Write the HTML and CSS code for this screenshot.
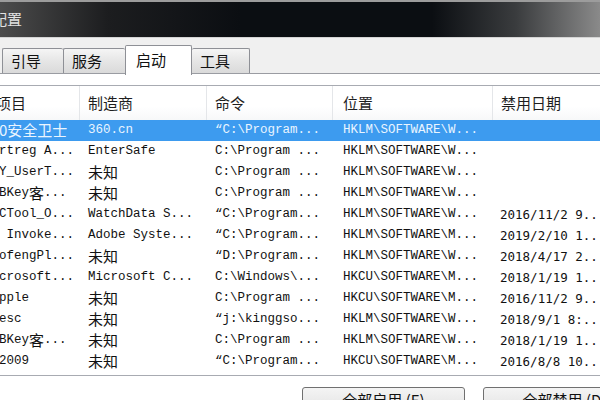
FILE: index.html
```html
<!DOCTYPE html>
<html lang="zh-CN">
<head>
    <meta charset="UTF-8">
    <title>系统配置</title>
    <link rel="stylesheet" href="styles.css">
</head>
<body>
    <div class="titlebar">
        <span class="title">系统配置</span>
    </div>

    <div class="tabbar">
        <div class="tab tab-boot">引导</div>
        <div class="tab tab-svc">服务</div>
        <div class="tab tab-start active">启动</div>
        <div class="tab tab-tools">工具</div>
    </div>

    <div class="panel">
        <div class="list">
            <div class="lv-head">
                <div class="hc c1">启动项目</div>
                <div class="hc">制造商</div>
                <div class="hc">命令</div>
                <div class="hc c4">位置</div>
                <div class="hc">禁用日期</div>
            </div>

            <div class="row sel">
                <div class="cell c1">36<span class="zh">0安全卫士</span></div>
                <div class="cell">360.cn</div>
                <div class="cell">“C:\Program...</div>
                <div class="cell c4">HKLM\SOFTWARE\W...</div>
                <div class="cell date"></div>
            </div>
            <div class="row">
                <div class="cell c1">Vertreg A...</div>
                <div class="cell">EnterSafe</div>
                <div class="cell">C:\Program ...</div>
                <div class="cell c4">HKLM\SOFTWARE\W...</div>
                <div class="cell date"></div>
            </div>
            <div class="row">
                <div class="cell c1">HWY_UserT...</div>
                <div class="cell"><span class="zh">未知</span></div>
                <div class="cell">C:\Program ...</div>
                <div class="cell c4">HKLM\SOFTWARE\W...</div>
                <div class="cell date"></div>
            </div>
            <div class="row">
                <div class="cell c1">USBKey<span class="zh">客</span>...</div>
                <div class="cell"><span class="zh">未知</span></div>
                <div class="cell">C:\Program ...</div>
                <div class="cell c4">HKLM\SOFTWARE\W...</div>
                <div class="cell date"></div>
            </div>
            <div class="row">
                <div class="cell c1">HWCTool_O...</div>
                <div class="cell">WatchData S...</div>
                <div class="cell">“C:\Program...</div>
                <div class="cell c4">HKLM\SOFTWARE\W...</div>
                <div class="cell date">2016/11/2 9...</div>
            </div>
            <div class="row">
                <div class="cell c1">AR Invoke...</div>
                <div class="cell">Adobe Syste...</div>
                <div class="cell">“C:\Program...</div>
                <div class="cell c4">HKLM\SOFTWARE\M...</div>
                <div class="cell date">2019/2/10 1...</div>
            </div>
            <div class="row">
                <div class="cell c1">BaofengPl...</div>
                <div class="cell"><span class="zh">未知</span></div>
                <div class="cell">“D:\Program...</div>
                <div class="cell c4">HKLM\SOFTWARE\W...</div>
                <div class="cell date">2018/4/17 2...</div>
            </div>
            <div class="row">
                <div class="cell c1">Microsoft...</div>
                <div class="cell">Microsoft C...</div>
                <div class="cell">C:\Windows\...</div>
                <div class="cell c4">HKCU\SOFTWARE\M...</div>
                <div class="cell date">2018/1/19 1...</div>
            </div>
            <div class="row">
                <div class="cell c1">QApple</div>
                <div class="cell"><span class="zh">未知</span></div>
                <div class="cell">C:\Program ...</div>
                <div class="cell c4">HKCU\SOFTWARE\M...</div>
                <div class="cell date">2016/11/2 9...</div>
            </div>
            <div class="row">
                <div class="cell c1">KSesc</div>
                <div class="cell"><span class="zh">未知</span></div>
                <div class="cell">“j:\kinggso...</div>
                <div class="cell c4">HKLM\SOFTWARE\W...</div>
                <div class="cell date">2018/9/1 8:...</div>
            </div>
            <div class="row">
                <div class="cell c1">USBKey<span class="zh">客</span>...</div>
                <div class="cell"><span class="zh">未知</span></div>
                <div class="cell">C:\Program ...</div>
                <div class="cell c4">HKLM\SOFTWARE\W...</div>
                <div class="cell date">2018/1/19 1...</div>
            </div>
            <div class="row">
                <div class="cell c1">QQ2009</div>
                <div class="cell"><span class="zh">未知</span></div>
                <div class="cell">“C:\Program...</div>
                <div class="cell c4">HKCU\SOFTWARE\M...</div>
                <div class="cell date">2016/8/8 10...</div>
            </div>
        </div>

        <div class="actions">
            <button class="btn">全部启用 (E)</button>
            <button class="btn">全部禁用 (D)</button>
        </div>
    </div>
</body>
</html>
```

FILE: styles.css
```css
* {
    margin: 0;
    padding: 0;
    box-sizing: border-box;
}

body {
    width: 600px;
    height: 400px;
    overflow: hidden;
    background: #f0f0f0;
    font-family: "Noto Sans CJK SC", sans-serif;
    color: #111;
}

/* window caption */
.titlebar {
    height: 38px;
    border-top: 2px solid #9c9c9c;
    border-bottom: 1px solid #d4d4d4;
    background: linear-gradient(90deg, #4c4c4c 0%, #1c1d1f 18%, #0b0e12 40%, #0b0e12 72%, #3a3c3e 86%, #8a8a8a 100%);
    overflow: hidden;
}

.title {
    display: block;
    margin-left: -38px;
    padding-top: 7px;
    font-size: 15px;
    line-height: 20px;
    color: #e2e2e2;
    white-space: nowrap;
}

/* tabs */
.tabbar {
    height: 35px;
    display: flex;
    align-items: flex-end;
    padding-left: 2px;
}

.tab {
    height: 25px;
    padding-left: 8px;
    font-size: 15px;
    line-height: 23px;
    color: #111;
    border: 1px solid #8e9096;
    border-bottom: none;
    border-right: none;
    border-radius: 2px 2px 0 0;
    background: linear-gradient(#f5f5f5, #e6e6e6 50%, #dadada);
}

.tab-boot { width: 61px; }
.tab-svc { width: 62px; }
.tab-tools { width: 58px; border-right: 1px solid #8e9096; }

.tab.active {
    position: relative;
    z-index: 1;
    width: 67px;
    height: 30px;
    margin-bottom: -2px;
    padding-left: 10px;
    line-height: 27px;
    background: #fff;
    border-right: 1px solid #8e9096;
}

.tab.active + .tab {
    border-left: none;
}

/* tab page */
.panel {
    height: 400px;
    background: #fff;
    border-top: 1px solid #9a9ca2;
    padding-top: 11px;
}

.list {
    margin-left: -40px;
    width: 680px;
    border-top: 1px solid #a8abb2;
    border-bottom: 1px solid #a8abb2;
    padding-bottom: 3px;
}

.lv-head,
.row {
    display: grid;
    grid-template-columns: 120px 127px 126px 160px 147px;
}

.lv-head {
    height: 34px;
    background: linear-gradient(#fff, #fff 60%, #f7f8f9);
}

.hc {
    padding-left: 8px;
    font-size: 15px;
    line-height: 33px;
    color: #1e1e1e;
    border-right: 1px solid #e4e6e9;
    white-space: nowrap;
}

.hc.c1 {
    padding-left: 6px;
}

.hc.c4 {
    padding-left: 10px;
}

.row {
    height: 21px;
}

.cell {
    height: 21px;
    padding-left: 8px;
    font-family: "Liberation Mono", "Noto Sans CJK SC", monospace;
    font-size: 12.5px;
    line-height: 21px;
    color: #111;
    white-space: nowrap;
    overflow: hidden;
}

.cell.c1 {
    padding-left: 24px;
}

.cell.c4 {
    padding-left: 10px;
}

.cell.date {
    padding-left: 7px;
    font-family: "DejaVu Sans Mono", monospace;
}

.zh {
    font-family: "Noto Sans CJK SC", sans-serif;
    font-size: 15px;
    line-height: 19px;
    vertical-align: top;
}

.row.sel {
    background: #3d9bef;
}

.row.sel .cell {
    color: #eaf5ff;
}

/* bottom buttons */
.actions {
    display: flex;
    gap: 18px;
    margin-top: 11px;
    margin-left: 302px;
}

.btn {
    flex: none;
    width: 163px;
    height: 26px;
    font-family: "Noto Sans CJK SC", sans-serif;
    font-size: 15px;
    line-height: 22px;
    color: #111;
    white-space: nowrap;
    border: 1px solid #707070;
    border-radius: 3px;
    background: linear-gradient(#f4f4f4, #ebebeb 50%, #dddddd 51%, #cfcfcf);
}
```
